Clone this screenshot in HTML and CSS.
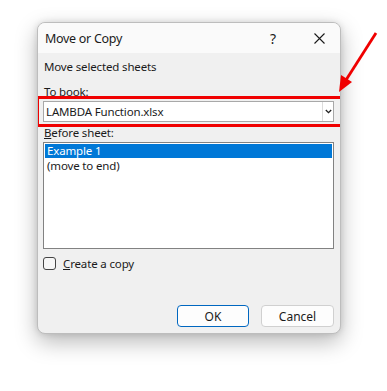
FILE: index.html
```html
<!DOCTYPE html>
<html lang="en">
<head>
    <meta charset="UTF-8">
    <title>Move or Copy</title>
    <link rel="stylesheet" href="styles.css">
</head>
<body>
    <div class="dialog">
        <div class="titlebar">
            <span class="title">Move or Copy</span>
            <span class="help">?</span>
            <span class="close">
                <svg width="11" height="11" viewBox="0 0 11 11"><path d="M0.5 0.5 L10.5 10.5 M10.5 0.5 L0.5 10.5" stroke="#1a1a1a" stroke-width="1.1" fill="none"/></svg>
            </span>
        </div>
        <div class="content">
            <p class="intro">Move selected sheets</p>
            <div class="label">To book:</div>
            <div class="combo">
                <span class="combo-text">LAMBDA Function.xlsx</span>
                <span class="combo-drop">
                    <svg width="7" height="5" viewBox="0 0 7 5"><path d="M0.8 1 L3.5 3.7 L6.2 1" stroke="#222" stroke-width="1.3" fill="none"/></svg>
                </span>
                <div class="highlight"></div>
            </div>
            <div class="label"><u>B</u>efore sheet:</div>
            <ul class="listbox">
                <li class="selected">Example 1</li>
                <li>(move to end)</li>
            </ul>
            <label class="check">
                <span class="box"></span>
                <span><u>C</u>reate a copy</span>
            </label>
            <div class="buttons">
                <button class="btn btn-default">OK</button>
                <button class="btn">Cancel</button>
            </div>
        </div>
    </div>

    <!-- annotation arrow -->
    <svg class="arrow" width="387" height="391" viewBox="0 0 387 391">
        <line x1="376" y1="33" x2="346" y2="80" stroke="#f00000" stroke-width="2.8"/>
        <polygon points="339,92 352,82 341,75" fill="#f00000"/>
    </svg>
</body>
</html>
```

FILE: styles.css
```css
:root {
    --dialog-bg: #f0f0f0; --title-bg: #fafafa; --text: #1b1b1b;
    --accent: #0078d7; --btn-border: #0067c0; --red: #f00000;
}
body { margin: 0; background: #fff; font-family: 'Noto Sans', 'Open Sans', sans-serif; color: var(--text); position: relative; width: 387px; height: 391px; overflow: hidden; }
.dialog { margin: 22px 0 0 37px; width: 304px; height: 312px; box-sizing: border-box; border: 1px solid #bdbdbd; border-radius: 8px; background: var(--dialog-bg); box-shadow: 0 8px 22px rgba(0,0,0,0.28), 0 0 6px rgba(0,0,0,0.12); overflow: hidden; display: flex; flex-direction: column; }
.titlebar { height: 30px; background: var(--title-bg); display: flex; align-items: center; padding-left: 7px; flex-shrink: 0; }
.title { font-size: 12.5px; letter-spacing: -0.3px; flex: 1; }
.help { font-size: 14px; width: 20px; margin-right: 26px; text-align: center; }
.close { width: 20px; margin-right: 11px; display: flex; justify-content: center; }
.content { padding: 0 6px 0 5px; font-size: 11.5px; letter-spacing: -0.15px; }
.intro { margin: 6px 0 0 1px; line-height: 16px; }
.label { margin: 9px 0 0 1px; line-height: 16px; }
.combo + .label { margin-top: 3px; }
.combo { margin-top: 1px; height: 21px; box-sizing: border-box; border: 1px solid #a8a8a8; background: #fff; display: flex; align-items: center; position: relative; }
.combo-text { flex: 1; padding-left: 2px; }
.combo-drop { width: 10px; height: 19px; border-left: 1px solid #dcdcdc; display: flex; align-items: center; justify-content: center; }
.highlight { position: absolute; left: -8px; top: -6px; right: -10px; bottom: -6px; border: 3px solid var(--red); }
.listbox { list-style: none; margin: 1px 0 0; padding: 1px; height: 107px; box-sizing: border-box; border: 1px solid #828282; background: #fff; }
.listbox li { height: 14px; line-height: 14px; padding-left: 2px; overflow: hidden; }
.listbox li + li { margin-top: 1px; }
.listbox .selected { background: var(--accent); color: #fff; }
.check { margin-top: 8px; height: 13px; display: flex; align-items: center; gap: 7px; }
.box { width: 11px; height: 11px; border: 1px solid #444; border-radius: 3px; background: #f6f6f6; }
.buttons { margin-top: 35px; display: flex; justify-content: flex-end; gap: 12px; }
.btn { width: 73px; height: 22px; border: 1px solid #d0d0d0; border-radius: 4px; background: #fdfdfd; font-family: inherit; font-size: 12px; color: var(--text); padding: 0; }
.btn-default { border: 1.5px solid var(--btn-border); width: 72px; }
.arrow { position: absolute; left: 0; top: 0; pointer-events: none; }
```
